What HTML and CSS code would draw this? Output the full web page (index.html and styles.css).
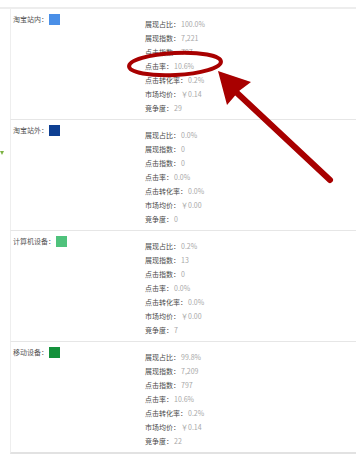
FILE: index.html
```html
<!DOCTYPE html>
<html lang="zh-CN">
<head>
<meta charset="utf-8">
<link rel="stylesheet" href="styles.css">
</head>
<body>
<div class="page">
  <div class="panel">
    <section class="row">
      <div class="cat"><span class="cat-name">淘宝站内：</span><span class="swatch c1"></span></div>
      <ul class="stats">
        <li><span class="k">展现占比：</span><span class="v">100.0%</span></li>
        <li><span class="k">展现指数：</span><span class="v">7,221</span></li>
        <li><span class="k">点击指数：</span><span class="v">797</span></li>
        <li><span class="k">点击率：</span><span class="v">10.6%</span></li>
        <li><span class="k">点击转化率：</span><span class="v">0.2%</span></li>
        <li><span class="k">市场均价：</span><span class="v">￥0.14</span></li>
        <li><span class="k">竞争度：</span><span class="v">29</span></li>
      </ul>
    </section>
    <section class="row">
      <div class="cat"><span class="cat-name">淘宝站外：</span><span class="swatch c2"></span></div>
      <ul class="stats">
        <li><span class="k">展现占比：</span><span class="v">0.0%</span></li>
        <li><span class="k">展现指数：</span><span class="v">0</span></li>
        <li><span class="k">点击指数：</span><span class="v">0</span></li>
        <li><span class="k">点击率：</span><span class="v">0.0%</span></li>
        <li><span class="k">点击转化率：</span><span class="v">0.0%</span></li>
        <li><span class="k">市场均价：</span><span class="v">￥0.00</span></li>
        <li><span class="k">竞争度：</span><span class="v">0</span></li>
      </ul>
    </section>
    <section class="row">
      <div class="cat"><span class="cat-name">计算机设备：</span><span class="swatch c3"></span></div>
      <ul class="stats">
        <li><span class="k">展现占比：</span><span class="v">0.2%</span></li>
        <li><span class="k">展现指数：</span><span class="v">13</span></li>
        <li><span class="k">点击指数：</span><span class="v">0</span></li>
        <li><span class="k">点击率：</span><span class="v">0.0%</span></li>
        <li><span class="k">点击转化率：</span><span class="v">0.0%</span></li>
        <li><span class="k">市场均价：</span><span class="v">￥0.00</span></li>
        <li><span class="k">竞争度：</span><span class="v">7</span></li>
      </ul>
    </section>
    <section class="row">
      <div class="cat"><span class="cat-name">移动设备：</span><span class="swatch c4"></span></div>
      <ul class="stats">
        <li><span class="k">展现占比：</span><span class="v">99.8%</span></li>
        <li><span class="k">展现指数：</span><span class="v">7,209</span></li>
        <li><span class="k">点击指数：</span><span class="v">797</span></li>
        <li><span class="k">点击率：</span><span class="v">10.6%</span></li>
        <li><span class="k">点击转化率：</span><span class="v">0.2%</span></li>
        <li><span class="k">市场均价：</span><span class="v">￥0.14</span></li>
        <li><span class="k">竞争度：</span><span class="v">22</span></li>
      </ul>
    </section>
  </div>
  <span class="edge-mark"></span>
  <svg class="annot" width="356" height="454" viewBox="0 0 356 454">
    <ellipse cx="175" cy="64" rx="46" ry="11" fill="none" stroke="#a80000" stroke-width="4" transform="rotate(-3 175 64)"/>
    <line x1="236" y1="92" x2="330" y2="180" stroke="#a80000" stroke-width="6" stroke-linecap="round"/>
    <polygon points="218,71 251,82 239,91 227,105" fill="#a80000"/>
  </svg>
</div>
</body>
</html>
```
FILE: styles.css
```css
html, body {
  margin: 0;
  padding: 0;
  background: #fff;
}
.page {
  position: relative;
  width: 356px;
  height: 454px;
  overflow: hidden;
  font-family: "Noto Sans CJK SC", "Noto Sans", sans-serif;
  font-size: 7px;
}
.panel {
  margin-top: 7px;
  border-top: 2px solid #ededed;
  margin-left: 0;
}
.row {
  display: flex;
  margin-left: 10px;
  border-left: 1px solid #eeeeee;
  border-bottom: 1px solid #e6e6e6;
  height: 110px;
  box-sizing: content-box;
}
.row:last-child {
  border-bottom: 2px solid #e2e2e2;
}
.cat {
  width: 132px;
  padding-left: 2px;
  padding-top: 5px;
  display: flex;
  align-items: flex-start;
}
.cat-name {
  color: #555;
  line-height: 11px;
  white-space: nowrap;
}
.swatch {
  width: 11px;
  height: 11px;
  margin-left: 1px;
  flex: none;
}
.c1 { background: #4a8fe7; }
.c2 { background: #0e3f92; }
.c3 { background: #4fc27c; }
.c4 { background: #14913c; }
.stats {
  list-style: none;
  margin: 0;
  padding: 8px 0 0 0;
}
.stats li {
  height: 14px;
  line-height: 14px;
  white-space: nowrap;
}
.k {
  color: #4a4a4a;
}
.v {
  color: #a8a8a8;
  margin-left: 1px;
}
.edge-mark {
  position: absolute;
  left: 0;
  top: 151px;
  width: 0;
  height: 0;
  border-left: 2px solid transparent;
  border-right: 2px solid transparent;
  border-top: 4px solid #7cb342;
}
.annot {
  position: absolute;
  left: 0;
  top: 0;
  pointer-events: none;
}
```
